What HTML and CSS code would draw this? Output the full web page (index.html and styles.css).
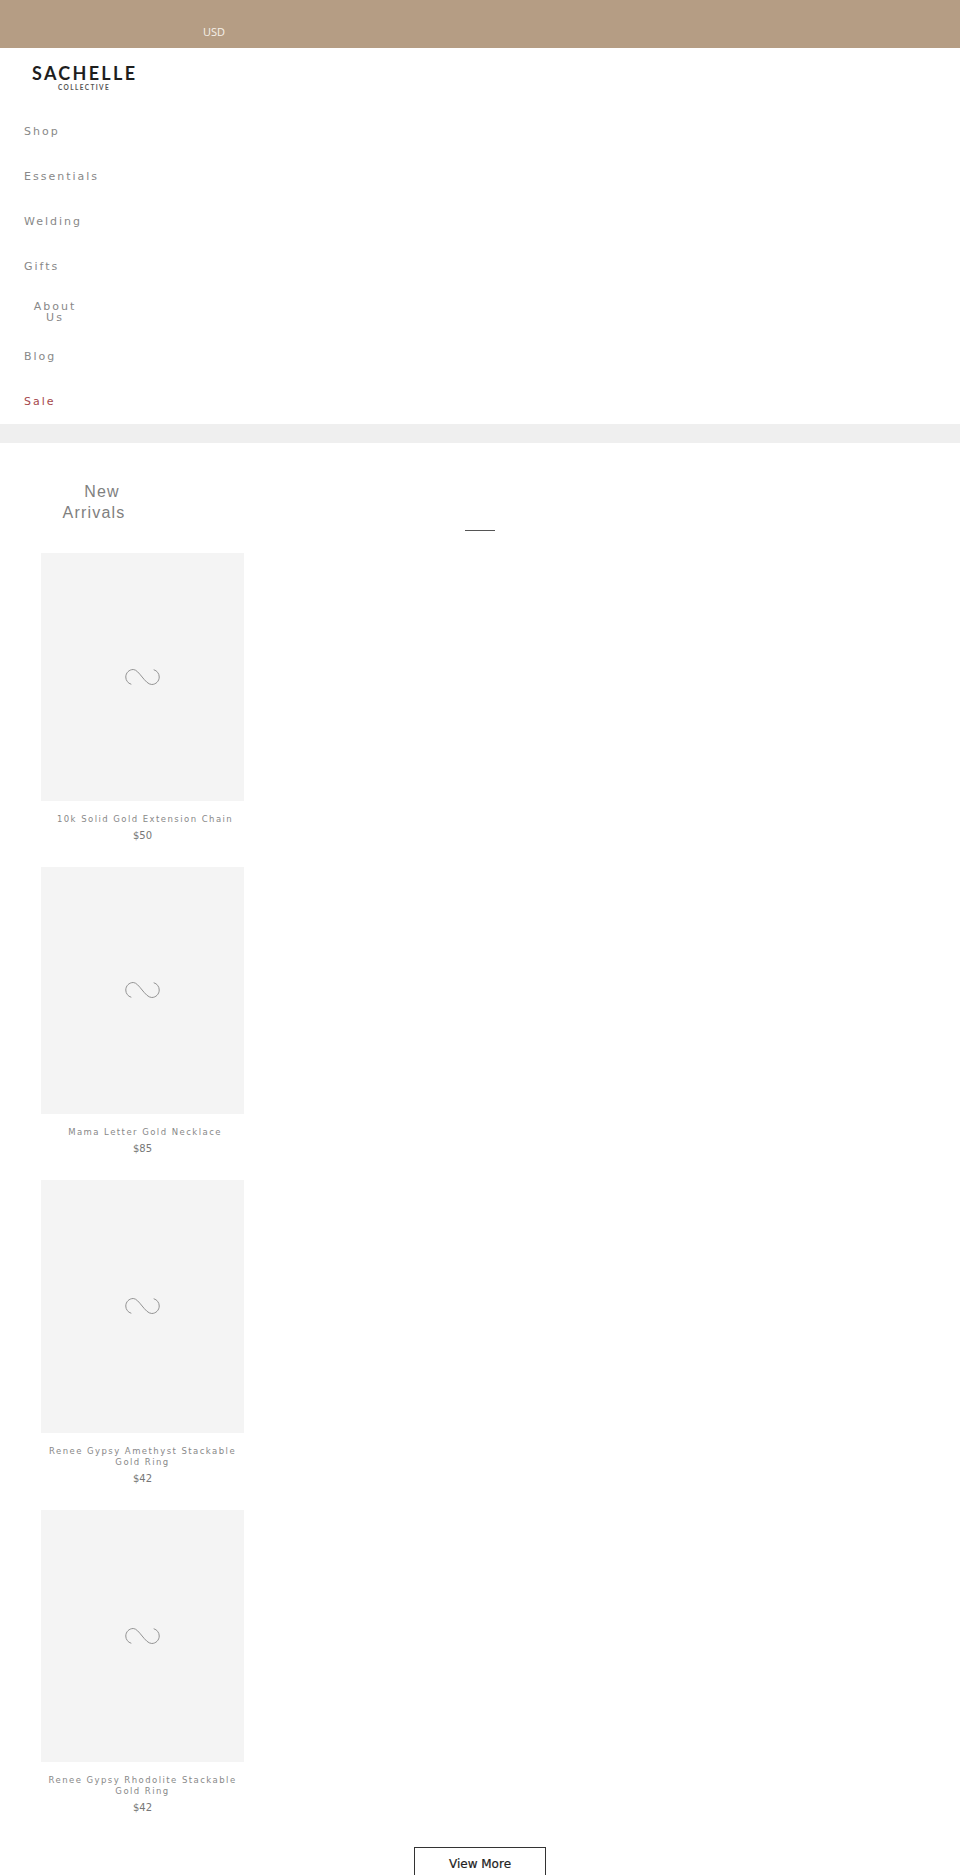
FILE: index.html
```html
<!DOCTYPE html>
<html lang="en">
<head>
  <meta charset="UTF-8">
  <title>Sachelle Collective</title>
  <meta name="viewport" content="width=device-width, initial-scale=1.0">
  <link rel="stylesheet" href="styles.css">
</head>
<body>
  <div class="top-bar">
    <span class="currency">USD</span>
  </div>
  <header class="site-header">
    <a href="#" class="logo">
      <span class="logo-name">SACHELLE</span>
      <span class="logo-sub">COLLECTIVE</span>
    </a>
    <nav class="main-nav">
      <a href="#" class="nav-link">Shop</a>
      <a href="#" class="nav-link">Essentials</a>
      <a href="#" class="nav-link">Welding</a>
      <a href="#" class="nav-link">Gifts</a>
      <a href="#" class="nav-link nav-link-wrap">About Us</a>
      <a href="#" class="nav-link">Blog</a>
      <a href="#" class="nav-link nav-link-sale">Sale</a>
    </nav>
  </header>
  <div class="band"></div>
  <main class="new-arrivals">
    <h2 class="section-title">New Arrivals</h2>
    <div class="divider"></div>
    <div class="product-list">
      <a href="#" class="product">
        <div class="product-image">
          <svg class="placeholder" viewBox="0 0 36 18"><path d="M6.500 16.500C3 15.500 .8 12.500 .8 9C.8 4.800 4.200 1.300 8.500 1.300C14.500 1.300 20.500 16.700 27.500 16.700C31.800 16.700 35.200 13.200 35.200 9C35.200 5.500 33 2.500 29.500 1.500"/></svg>
        </div>
        <div class="product-name product-name-short">10k Solid Gold Extension Chain</div>
        <div class="product-price">$50</div>
      </a>
      <a href="#" class="product">
        <div class="product-image">
          <svg class="placeholder" viewBox="0 0 36 18"><path d="M6.500 16.500C3 15.500 .8 12.500 .8 9C.8 4.800 4.200 1.300 8.500 1.300C14.500 1.300 20.500 16.700 27.500 16.700C31.800 16.700 35.200 13.200 35.200 9C35.200 5.500 33 2.500 29.500 1.500"/></svg>
        </div>
        <div class="product-name product-name-short">Mama Letter Gold Necklace</div>
        <div class="product-price">$85</div>
      </a>
      <a href="#" class="product">
        <div class="product-image product-image-tall">
          <svg class="placeholder" viewBox="0 0 36 18"><path d="M6.500 16.500C3 15.500 .8 12.500 .8 9C.8 4.800 4.200 1.300 8.500 1.300C14.500 1.300 20.500 16.700 27.500 16.700C31.800 16.700 35.200 13.200 35.200 9C35.200 5.500 33 2.500 29.500 1.500"/></svg>
        </div>
        <div class="product-name">Renee Gypsy Amethyst Stackable Gold Ring</div>
        <div class="product-price">$42</div>
      </a>
      <a href="#" class="product">
        <div class="product-image product-image-tall">
          <svg class="placeholder" viewBox="0 0 36 18"><path d="M6.500 16.500C3 15.500 .8 12.500 .8 9C.8 4.800 4.200 1.300 8.500 1.300C14.500 1.300 20.500 16.700 27.500 16.700C31.800 16.700 35.200 13.200 35.200 9C35.200 5.500 33 2.500 29.500 1.500"/></svg>
        </div>
        <div class="product-name">Renee Gypsy Rhodolite Stackable Gold Ring</div>
        <div class="product-price">$42</div>
      </a>
    </div>
    <div class="view-more-wrap">
      <a href="#" class="view-more">View More</a>
    </div>
  </main>
</body>
</html>
```

FILE: styles.css
```css
html, body {
  margin: 0;
  height: 1875px;
  overflow: hidden;
  background: #fff;
  font-family: 'DejaVu Sans', sans-serif;
  color: #777;
}
a {
  color: inherit;
  text-decoration: none;
}
.top-bar {
  height: 48px;
  box-sizing: border-box;
  background: #b59d84;
  padding: 25px 0 0 203px;
}
.currency {
  display: block;
  font-family: 'Open Sans', sans-serif;
  font-size: 11px;
  line-height: 14px;
  color: #f6f1ea;
}
.site-header {
  height: 376px;
}
/* Logo is text, no image available */
.logo {
  display: block;
  width: 104px;
  margin-left: 32px;
  padding-top: 16px;
  text-align: center;
  color: #1e1e1e;
  font-family: 'Lato', sans-serif;
}
.logo-name {
  display: block;
  font-size: 18px;
  line-height: 18px;
  font-weight: 700;
  letter-spacing: 2.3px;
  white-space: nowrap;
}
.logo-sub {
  display: block;
  margin-top: 2px;
  font-size: 6.5px;
  line-height: 8px;
  font-weight: 700;
  letter-spacing: 1.4px;
  color: #555;
}
.main-nav {
  display: flex;
  flex-direction: column;
  align-items: flex-start;
  margin-top: 17px;
  padding-left: 24px;
  font-size: 11px;
  letter-spacing: 2px;
}
.nav-link {
  height: 45px;
  line-height: 45px;
  color: #888;
}
.nav-link-wrap {
  width: 62px;
  box-sizing: border-box;
  padding-top: 12px;
  line-height: 11px;
  text-align: center;
}
.nav-link-sale {
  color: #a5474b;
}
.band {
  height: 19px;
  background: #efefef;
}
.new-arrivals {
  padding-top: 38px;
}
.section-title {
  width: 84px;
  margin: 0 0 0 52px;
  font-family: 'Liberation Sans', Arial, sans-serif;
  font-size: 16px;
  line-height: 21px;
  font-weight: 400;
  letter-spacing: 1.2px;
  text-align: center;
  text-indent: 16px;
  color: #808080;
}
.divider {
  width: 30px;
  height: 1px;
  margin: 7px auto 22px;
  background: #555;
}
.product-list {
  display: flex;
  flex-direction: column;
  gap: 25px;
  width: 202.5px;
  margin-left: 41.3px;
}
.product {
  display: block;
  text-align: center;
}
.product-image {
  display: flex;
  align-items: center;
  justify-content: center;
  height: 247.5px;
  background: #f4f4f4;
}
.product-image-tall {
  height: 252.5px;
}
.placeholder {
  width: 35px;
  height: 18px;
  fill: none;
  stroke: #8e8e8e;
  stroke-width: 1;
}
.product-name {
  margin-top: 13px;
  font-size: 8.5px;
  line-height: 11px;
  letter-spacing: 1.45px;
  color: #888;
}
.product-name-short {
  padding-left: 5px;
}
.product-price {
  margin-top: 5px;
  font-size: 10px;
  line-height: 12px;
  color: #777;
}
.view-more-wrap {
  display: flex;
  justify-content: center;
  margin-top: 33px;
}
.view-more {
  display: block;
  width: 132px;
  height: 46px;
  box-sizing: border-box;
  border: 1px solid #333;
  font-size: 12px;
  line-height: 33px;
  text-align: center;
  color: #222;
  -webkit-text-stroke: 0.2px #222;
}
```
